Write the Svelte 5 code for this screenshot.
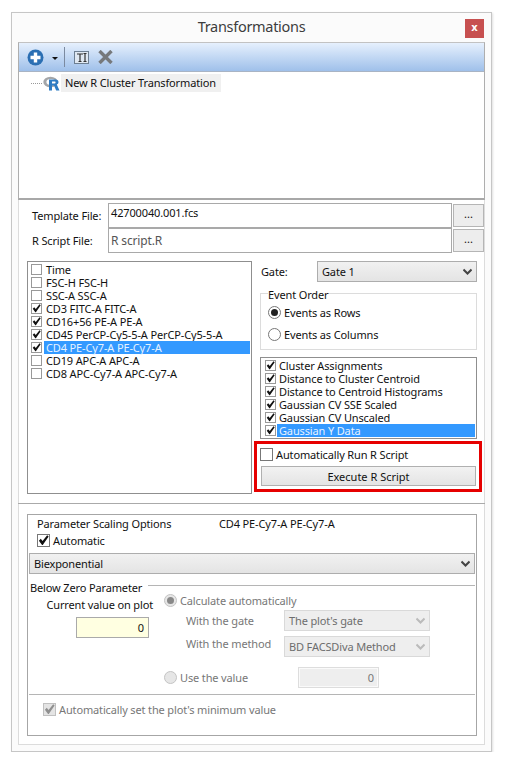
<script>
    const params = [
        { name: 'Time', on: false },
        { name: 'FSC-H FSC-H', on: false },
        { name: 'SSC-A SSC-A', on: false },
        { name: 'CD3 FITC-A FITC-A', on: true },
        { name: 'CD16+56 PE-A PE-A', on: true },
        { name: 'CD45 PerCP-Cy5-5-A PerCP-Cy5-5-A', on: true },
        { name: 'CD4 PE-Cy7-A PE-Cy7-A', on: true, sel: true },
        { name: 'CD19 APC-A APC-A', on: false },
        { name: 'CD8 APC-Cy7-A APC-Cy7-A', on: false },
    ];
    const outputs = [
        { name: 'Cluster Assignments', on: true },
        { name: 'Distance to Cluster Centroid', on: true },
        { name: 'Distance to Centroid Histograms', on: true },
        { name: 'Gaussian CV SSE Scaled', on: true },
        { name: 'Gaussian CV Unscaled', on: true },
        { name: 'Gaussian Y Data', on: true, sel: true },
    ];
</script>

{#snippet check(on, cls = '')}
    <span class="check {cls}">
        {#if on}
            <svg viewBox="0 0 12 12" width="100%" height="100%"><path d="M1 6.2 L3 4.2 L5 6.6 L10 0.4 L11.6 1.6 L5.2 11 H4.4 Z" fill="currentColor" /></svg>
        {/if}
    </span>
{/snippet}

{#snippet chevron()}
    <svg class="chev" viewBox="0 0 9 7" width="9" height="7"><path d="M0.5 1.5 L4.5 5.5 L8.5 1.5" fill="none" stroke="currentColor" stroke-width="2" /></svg>
{/snippet}

<div class="window">
    <header class="title">
        <span></span>
        <h1>Transformations</h1>
        <button class="close">x</button>
    </header>

    <div class="panel">
        <section class="frame">
            <div class="toolbar">
                <svg class="add" viewBox="0 0 17 17" width="17" height="17">
                    <circle cx="8.5" cy="8.5" r="8" fill="#2b6fb3" />
                    <path d="M8.5 3.5 V13.5 M3.5 8.5 H13.5" stroke="#fff" stroke-width="3.4" />
                </svg>
                <svg class="caret" viewBox="0 0 6 3" width="6" height="3"><path d="M0 0 H6 L3 3 Z" fill="#111" /></svg>
                <span class="sep"></span>
                <svg class="text-icon" viewBox="0 0 15 13" width="15" height="13">
                    <rect x="0.5" y="0.5" width="14" height="12" fill="#dfe8f2" stroke="#6d7f92" />
                    <path d="M3 3 H9 M6 3 V10.5 M4.5 10.5 H7.5 M11 2.5 V10.5 M9.5 2.5 H12.5 M9.5 10.5 H12.5" stroke="#333" stroke-width="1.2" fill="none" />
                </svg>
                <svg class="del" viewBox="0 0 15 14" width="15" height="14"><path d="M1.5 1 L13.5 13 M13.5 1 L1.5 13" stroke="#76797c" stroke-width="3.4" /></svg>
            </div>
            <div class="tree">
                <span class="dots"></span>
                <svg class="r-icon" viewBox="0 0 17 15" width="17" height="15">
                    <ellipse cx="7.5" cy="6" rx="7.2" ry="5.2" fill="#a4a6a9" />
                    <ellipse cx="8" cy="6" rx="4.6" ry="3" fill="#fff" />
                    <path d="M6 3.5 H12.5 Q15.5 3.5 15.5 6.2 Q15.5 8 13.8 8.6 L16.5 14.5 H13.2 L11 9.4 H9 V14.5 H6 Z M9 5.6 V7.4 H12 Q12.8 7.4 12.8 6.5 Q12.8 5.6 12 5.6 Z" fill="#2f7cc4" fill-rule="evenodd" />
                </svg>
                <span class="tree-label">New R Cluster Transformation</span>
            </div>
        </section>

        <section class="files">
            <div class="file-row">
                <span class="file-label">Template File:</span>
                <div class="file-input first">42700040.001.fcs</div>
                <button class="browse">...</button>
            </div>
            <div class="file-row">
                <span class="file-label">R Script File:</span>
                <div class="file-input second">R script.R</div>
                <button class="browse">...</button>
            </div>
        </section>

        <section class="middle">
            <div class="list params">
                {#each params as p}
                    <div class="item">
                        {@render check(p.on)}
                        <span class="item-text" class:sel={p.sel}>{p.name}</span>
                    </div>
                {/each}
            </div>

            <div class="side">
                <div class="gate-row">
                    <span class="gate-label">Gate:</span>
                    <div class="select gate">Gate 1 {@render chevron()}</div>
                </div>
                <div class="event-order">
                    <span class="legend">Event Order</span>
                    <div class="radio-row"><span class="radio on"></span>Events as Rows</div>
                    <div class="radio-row"><span class="radio"></span>Events as Columns</div>
                </div>
                <div class="list outputs">
                    {#each outputs as o}
                        <div class="item">
                            {@render check(o.on)}
                            <span class="item-text" class:sel={o.sel}>{o.name}</span>
                        </div>
                    {/each}
                </div>
                <div class="highlight">
                    <div class="auto-run">{@render check(false, 'big')}Automatically Run R Script</div>
                    <button class="execute">Execute R Script</button>
                </div>
            </div>
        </section>

        <section class="scaling">
            <div class="group">
                <div class="scale-head">
                    <span class="scale-title">Parameter Scaling Options</span>
                    <span>CD4 PE-Cy7-A PE-Cy7-A</span>
                </div>
                <div class="automatic">{@render check(true, 'big')}Automatic</div>
                <div class="select biexp">Biexponential {@render chevron()}</div>

                <div class="zero-legend"><span>Below Zero Parameter</span><i></i></div>

                <div class="zero-body">
                    <div class="current">
                        <span>Current value on plot</span>
                        <div class="value-box">0</div>
                    </div>
                    <div class="calc">
                        <div class="radio-row off calc-auto"><span class="radio on off"></span>Calculate automatically</div>
                        <div class="with-row">
                            <span>With the gate</span>
                            <div class="select off-select">The plot's gate {@render chevron()}</div>
                        </div>
                        <div class="with-row method">
                            <span>With the method</span>
                            <div class="select off-select">BD FACSDiva Method {@render chevron()}</div>
                        </div>
                        <div class="use-row">
                            <div class="radio-row off"><span class="radio off"></span>Use the value</div>
                            <div class="use-box">0</div>
                        </div>
                    </div>
                </div>

                <div class="min-row">{@render check(true, 'big disabled')}Automatically set the plot's minimum value</div>
            </div>
        </section>
    </div>
</div>

<style>
    :global(body) {
        background: #fff;
        font-family: "Noto Sans", sans-serif;
        font-size: 11px;
        letter-spacing: -0.14px;
        color: #111;
    }
    .window {
        box-sizing: border-box;
        width: 481px;
        height: 740px;
        margin: 12px 0 0 11px;
        padding: 0 6px;
        background: #fbfbfb;
        border: 1px solid #c6c6c6;
        box-shadow: 1px 1px 2px rgba(0, 0, 0, 0.12);
    }
    .title {
        display: grid;
        grid-template-columns: 1fr auto 1fr;
        align-items: center;
        height: 29px;
    }
    h1 {
        margin: 0;
        padding-bottom: 3px;
        font-size: 14.5px;
        font-weight: 400;
        letter-spacing: -0.3px;
        color: #3d3d3d;
    }
    .close {
        justify-self: end;
        width: 19px;
        height: 19px;
        margin: 2px 1px 0 0;
        padding: 0 0 3px;
        border: 0;
        background: #c75050;
        color: #fff;
        font: 700 10px "DejaVu Sans", sans-serif;
    }
    .panel {
        height: 703px;
        background: #fff;
        box-shadow: inset 0 0 0 1px #dcdcdc;
    }
    .frame {
        box-sizing: border-box;
        height: 158px;
        border: 1px solid #aeaeae;
        border-top-color: #c2c2c2;
        border-bottom: 2px solid #a8a8a8;
        background: #fff;
    }
    .toolbar {
        display: flex;
        align-items: center;
        box-sizing: border-box;
        height: 29px;
        padding-left: 8px;
        background: linear-gradient(#e6f0fd, #9fc0ea);
        border-bottom: 1px solid #a9b4c4;
    }
    .caret { margin: 3px 0 0 8px; }
    .sep {
        width: 1px;
        height: 20px;
        margin: 0 9px 0 6px;
        background: #7b8aa0;
    }
    .del { margin-left: 9px; }
    .tree {
        display: flex;
        align-items: center;
        padding: 2px 0 0 12px;
    }
    .dots {
        width: 11px;
        border-top: 1px dotted #999;
    }
    .r-icon { margin-left: 1px; }
    .tree-label {
        box-sizing: border-box;
        width: 160px;
        margin-left: 1px;
        padding: 0 4px;
        height: 18px;
        line-height: 17px;
        white-space: nowrap;
        background: #f0f0f0;
    }
    .files {
        padding-top: 3px;
    }
    .file-row {
        display: flex;
        align-items: center;
        height: 25px;
    }
    .file-label {
        width: 90px;
        padding-left: 14px;
        box-sizing: border-box;
    }
    .file-input {
        box-sizing: border-box;
        width: 344px;
        height: 25px;
        padding: 0 0 0 2px;
        border: 1px solid #a9a9a9;
        background: #fff;
    }
    .first { line-height: 18px; }
    .second {
        font-size: 12px;
        line-height: 23px;
        color: #555;
    }
    .browse {
        width: 31px;
        height: 23px;
        margin-left: 1px;
        padding: 0 0 4px;
        border: 1px solid #b5b5b5;
        background: #ededed;
        font: 11px "Noto Sans", sans-serif;
        color: #111;
    }
    .middle {
        display: flex;
        gap: 8px;
        height: 251px;
        padding: 8px 0 0 9px;
        box-sizing: border-box;
        border-bottom: 1px solid #aaa;
    }
    .list {
        box-sizing: border-box;
        background: #fff;
        border: 1px solid #8f8f8f;
        padding: 1px;
    }
    .params {
        width: 225px;
        height: 233px;
    }
    .item {
        display: flex;
        align-items: center;
        height: 13px;
        line-height: 13px;
    }
    .check {
        flex: none;
        box-sizing: border-box;
        width: 11px;
        height: 11px;
        margin-left: 2px;
        border: 1px solid #999;
        background: #fff;
        color: #111;
    }
    .check svg { display: block; }
    .check.big {
        width: 13px;
        height: 13px;
        margin-left: 0;
        border-color: #777;
    }
    .check.disabled {
        background: #e4e4e4;
        border-color: #c0c0c0;
        color: #8f8f8f;
    }
    .item-text {
        flex: 1;
        margin-left: 2px;
        padding-left: 2px;
    }
    .item-text.sel {
        background: #3399ff;
        color: #e6f2ff;
    }
    .side {
        width: 217px;
    }
    .gate-row {
        display: flex;
        align-items: center;
        height: 21px;
    }
    .gate-label { width: 57px; padding-left: 1px; box-sizing: border-box; padding-bottom: 1px; }
    .select {
        display: flex;
        align-items: center;
        justify-content: space-between;
        box-sizing: border-box;
        height: 21px;
        padding: 0 4px 0 3px;
        border: 1px solid #adadad;
        background: linear-gradient(#f1f1f1, #e4e4e4);
    }
    .gate {
        width: 160px;
        padding-left: 4px;
    }
    .chev { color: #444; }
    .event-order {
        position: relative;
        box-sizing: border-box;
        height: 57px;
        margin-top: 11px;
        padding-top: 10px;
        border: 1px solid #dcdcdc;
    }
    .legend {
        position: absolute;
        top: -6px;
        left: 7px;
        background: #fff;
        line-height: 13px;
    }
    .radio-row {
        display: flex;
        align-items: center;
        height: 16px;
    }
    .event-order .radio-row { padding-left: 7px; }
    .event-order .radio-row + .radio-row { margin-top: 6px; }
    .radio {
        position: relative;
        flex: none;
        box-sizing: border-box;
        width: 13px;
        height: 13px;
        margin-right: 3px;
        border: 1px solid #777;
        border-radius: 50%;
        background: #fff;
    }
    .radio.on::after {
        content: "";
        position: absolute;
        inset: 2px;
        border-radius: 50%;
        background: #222;
    }
    .radio.off {
        border-color: #c4c4c4;
        background: #e6e6e6;
    }
    .radio.on.off::after { background: #888; }
    .off { color: #777; }
    .outputs {
        height: 82px;
        margin-top: 7px;
    }
    .outputs .check { margin-left: 3px; }
    .outputs .item-text { margin-left: 1px; }
    .highlight {
        box-sizing: border-box;
        width: 228px;
        height: 51px;
        margin: 2px 0 0 -6px;
        padding: 3px 3px 0 3px;
        border: 3px solid #e60000;
    }
    .auto-run {
        display: flex;
        align-items: center;
        gap: 3px;
        height: 14px;
    }
    .execute {
        display: block;
        box-sizing: border-box;
        width: 215px;
        height: 20px;
        margin: 5px 0 0 1px;
        padding: 0;
        border: 1px solid #b0b0b0;
        background: linear-gradient(#f2f2f2, #e4e4e4);
        font: 11px "Noto Sans", sans-serif;
        color: #111;
    }
    .scaling {
        padding: 10px 0 0 9px;
    }
    .group {
        box-sizing: border-box;
        width: 450px;
        height: 222px;
        padding: 2px 1px;
        border: 1px solid #a6a6a6;
        background: #fff;
    }
    .scale-head {
        display: flex;
        height: 13px;
        line-height: 13px;
        padding-left: 8px;
    }
    .scale-title { width: 182px; }
    .automatic {
        display: flex;
        align-items: center;
        gap: 3px;
        height: 14px;
        margin-top: 3px;
        padding-left: 8px;
    }
    .biexp {
        width: 446px;
        margin: 6px 0 0 0;
        padding-left: 4px;
    }
    .zero-legend {
        display: flex;
        align-items: center;
        gap: 6px;
        height: 14px;
        margin-top: 6px;
        padding-left: 1px;
    }
    .zero-legend i {
        flex: 1;
        margin-bottom: 3px;
        border-top: 1px solid #b5b5b5;
    }
    .zero-body {
        display: flex;
        height: 100px;
        border-bottom: 1px solid #b5b5b5;
    }
    .current {
        display: flex;
        flex-direction: column;
        align-items: flex-end;
        width: 124px;
        padding-top: 3px;
    }
    .value-box {
        box-sizing: border-box;
        width: 73px;
        height: 21px;
        margin: 5px 4px 0 0;
        padding-right: 4px;
        line-height: 19px;
        text-align: right;
        background: #ffffe1;
        border: 1px solid #aaa;
    }
    .calc {
        width: 300px;
        margin-left: 11px;
    }
    .calc-auto { margin: -2px 0 2px; }
    .with-row {
        display: flex;
        align-items: center;
        height: 21px;
        padding-left: 22px;
        color: #777;
    }
    .with-row span { width: 98px; }
    .with-row.method { margin-top: 5px; }
    .with-row.method span { padding-bottom: 6px; }
    .off-select {
        width: 146px;
        padding-left: 4px;
        background: #eee;
        border-color: #d9d9d9;
        color: #6d6d6d;
    }
    .off-select .chev { color: #bbb; }
    .use-row {
        display: flex;
        align-items: center;
        margin-top: 10px;
    }
    .use-row .radio-row { width: 134px; }
    .use-box {
        box-sizing: border-box;
        width: 81px;
        height: 21px;
        padding-right: 3px;
        line-height: 17px;
        text-align: right;
        color: #777;
        background: #eee;
        border: 2px solid #fafafa;
        outline: 1px solid #ddd;
        outline-offset: -1px;
    }
    .min-row {
        display: flex;
        align-items: center;
        gap: 3px;
        height: 14px;
        margin-top: 7px;
        padding-left: 14px;
        color: #777;
    }
</style>
